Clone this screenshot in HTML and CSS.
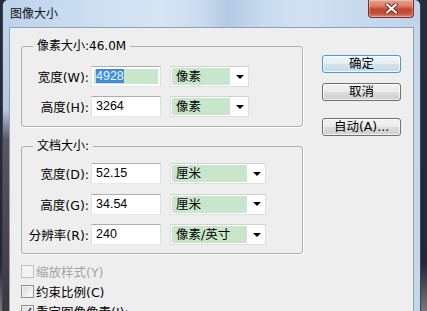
FILE: index.html
```html
<!DOCTYPE html>
<html lang="zh-CN">
<head>
    <meta charset="UTF-8">
    <meta name="viewport" content="width=device-width, initial-scale=1.0">
    <title>图像大小</title>
    <link rel="stylesheet" href="styles.css">
</head>
<body>
    <div class="window">
        <div class="titlebar">
            <span class="title">图像大小</span>
            <button type="button" class="close">
                <svg width="13" height="11" viewBox="0 0 13 11">
                    <path d="M2 1.5 L11 9.5 M11 1.5 L2 9.5" stroke="#6a2b25" stroke-width="4" stroke-linecap="round"/>
                    <path d="M2 1.5 L11 9.5 M11 1.5 L2 9.5" stroke="#fff" stroke-width="2.2" stroke-linecap="round"/>
                </svg>
            </button>
        </div>
        <div class="client">
            <div class="main">
                <fieldset class="group">
                    <legend>像素大小:46.0M</legend>
                    <div class="rows">
                        <div class="row">
                            <label>宽度(W):</label>
                            <div class="field field-hl"><span class="sel">4928</span></div>
                            <div class="combo"><span class="combo-val">像素</span><span class="combo-btn"><i class="arrow"></i></span></div>
                        </div>
                        <div class="row">
                            <label>高度(H):</label>
                            <div class="field">3264</div>
                            <div class="combo"><span class="combo-val">像素</span><span class="combo-btn"><i class="arrow"></i></span></div>
                        </div>
                    </div>
                </fieldset>

                <fieldset class="group group-doc">
                    <legend>文档大小:</legend>
                    <div class="rows">
                        <div class="row">
                            <label>宽度(D):</label>
                            <div class="field">52.15</div>
                            <div class="combo combo-wide"><span class="combo-val">厘米</span><span class="combo-btn"><i class="arrow"></i></span></div>
                        </div>
                        <div class="row">
                            <label>高度(G):</label>
                            <div class="field">34.54</div>
                            <div class="combo combo-wide"><span class="combo-val">厘米</span><span class="combo-btn"><i class="arrow"></i></span></div>
                        </div>
                        <div class="row">
                            <label>分辨率(R):</label>
                            <div class="field">240</div>
                            <div class="combo combo-wide"><span class="combo-val">像素/英寸</span><span class="combo-btn"><i class="arrow"></i></span></div>
                        </div>
                    </div>
                </fieldset>

                <div class="checks">
                    <div class="check disabled"><span class="box"></span><span>缩放样式(Y)</span></div>
                    <div class="check"><span class="box"></span><span>约束比例(C)</span></div>
                    <div class="check">
                        <span class="box">
                            <svg width="11" height="11" viewBox="0 0 11 11"><path d="M2 5.5 L4.5 8.5 L9 2" fill="none" stroke="#3b4f7a" stroke-width="1.8"/></svg>
                        </span>
                        <span>重定图像像素(I):</span>
                    </div>
                </div>
            </div>

            <div class="buttons">
                <button type="button" class="btn btn-default">确定</button>
                <button type="button" class="btn">取消</button>
                <button type="button" class="btn btn-auto">自动(A)...</button>
            </div>
        </div>
    </div>
</body>
</html>
```

FILE: styles.css
```css
*{
    margin: 0;
    padding: 0;
    box-sizing: border-box;
}
body{
    width: 427px;
    height: 311px;
    overflow: hidden;
    background: linear-gradient(to bottom, #262c3b 0, #232838 85%, #7a777d 100%);
    font-family: "DejaVu Sans", "Noto Sans CJK SC", sans-serif;
    font-size: 12.5px;
    color: #000;
}
.window{
    margin-left: 2px;
    width: 419px;
    height: 340px;
    border: 1px solid #3a4352;
    border-top: none;
    border-bottom: none;
    border-radius: 6px 6px 0 0;
    padding: 0 6px;
    display: flex;
    flex-direction: column;
    background:
        linear-gradient(to bottom, #c6d9ee 0, #b4c7dc 110px, #5a5661 140px, #3b3136 100%) left top / 6px 100% no-repeat,
        #c3d6eb;
}
.titlebar{
    height: 27px;
    margin: 0 -6px;
    padding: 0 6px 0 7px;
    display: flex;
    justify-content: space-between;
    align-items: flex-start;
    background:
        linear-gradient(to right, #bcd2ea 0, #c8dbef 15%, #d6e5f3 38%, #cadcef 47%, #b3cae4 54%, #c6d9ee 62%, #d2e2f2 72%, #c9dbee 82%, #bed3ea 100%);
    border-radius: 6px 6px 0 0;
}
.title{
    font-family: "Noto Sans CJK SC", sans-serif;
    font-size: 12px;
    line-height: 14px;
    margin-top: 6px;
    color: #111;
}
.close{
    width: 46px;
    height: 18px;
    border: 1px solid #70312a;
    border-top: none;
    border-radius: 0 0 4px 4px;
    background: linear-gradient(to bottom, #e6a08d 0, #d88069 35%, #c4452f 55%, #c9513a 80%, #e08a72 100%);
    box-shadow: inset 0 0 0 1px rgba(255,255,255,.3);
    display: flex;
    align-items: center;
    justify-content: center;
}
.client{
    flex: 1;
    background: #eeeeee;
    border: 1px solid #8fa1b7;
    border-bottom: none;
    display: flex;
    gap: 19px;
    padding: 10px 0 0 11px;
}
.main{
    width: 282px;
}
.group{
    border: 1px solid #b0b0b0;
    border-radius: 3px;
    box-shadow: 1px 1px 0 #fff;
    min-width: 0;
}
.group legend{
    margin-left: 11px;
    padding: 0 4px;
    font-size: 12px;
    line-height: 16px;
}
.rows{
    display: flex;
    flex-direction: column;
    gap: 9px;
    padding: 12px 0 9px;
}
.group-doc{
    margin-top: 11px;
}
.group-doc .rows{
    gap: 9.5px;
    padding: 9px 0 8px;
}
.row{
    display: flex;
    align-items: center;
    height: 21px;
}
.row label{
    width: 67px;
    margin-right: 2px;
    text-align: right;
    white-space: nowrap;
}
.field{
    width: 70px;
    height: 21px;
    margin-right: 9px;
    border: 1px solid;
    border-color: #abadb3 #dbdfe6 #e3e9ef #e2e3ea;
    background: #fff;
    padding-left: 4px;
    font-family: "Liberation Sans", sans-serif;
    font-size: 12.5px;
    line-height: 19px;
}
.field-hl{
    background: #c8e6c9;
    box-shadow: inset 0 0 0 2px #fff;
}
.sel{
    background: #3f8cdb;
    color: #eef4ff;
}
.combo{
    width: 79px;
    height: 21px;
    border: 1px solid #dcdee2;
    border-top-color: #cfd1d5;
    background: #fff;
    padding: 1px;
    display: flex;
}
.combo-wide{
    width: 96px;
}
.combo-val{
    flex: 1;
    background: #c8e6c9;
    padding-left: 4px;
    line-height: 17px;
    white-space: nowrap;
}
.combo-btn{
    width: 17px;
    display: flex;
    align-items: center;
    justify-content: center;
}
.arrow{
    width: 0;
    height: 0;
    border-left: 4px solid transparent;
    border-right: 4px solid transparent;
    border-top: 4px solid #000;
    margin-left: 3px;
}
.checks{
    margin-top: 7px;
    display: flex;
    flex-direction: column;
}
.check{
    display: flex;
    align-items: center;
    gap: 2px;
    height: 20px;
    white-space: nowrap;
}
.box{
    width: 13px;
    height: 13px;
    border: 1px solid #8e8f8f;
    background: linear-gradient(135deg, #d6d6d6, #ffffff);
    box-shadow: inset 0 0 0 1px #f2f2f2;
    display: flex;
    align-items: center;
    justify-content: center;
}
.disabled{
    color: #a4a4a4;
}
.disabled .box{
    border-color: #c2c2c2;
    background: #f4f4f4;
}
.buttons{
    margin-top: 17px;
    display: flex;
    flex-direction: column;
    width: 79px;
}
.btn{
    width: 79px;
    height: 18px;
    border: 1px solid #707070;
    border-radius: 3px;
    background: linear-gradient(to bottom, #f2f2f2 0, #ebebeb 50%, #dddddd 50%, #cfcfcf 100%);
    box-shadow: inset 0 0 0 1px rgba(255,255,255,.7);
    font-family: "DejaVu Sans", "Noto Sans CJK SC", sans-serif;
    font-size: 12.5px;
    line-height: 16px;
    color: #000;
    text-align: center;
    margin-top: 10px;
}
.btn-default{
    margin-top: 0;
    border-color: #3c9fd4;
    background: linear-gradient(to bottom, #eef5fa 0, #e2edf5 50%, #d3e2ee 50%, #c7d9e7 100%);
}
.btn-auto{
    margin-top: 17px;
}
```
